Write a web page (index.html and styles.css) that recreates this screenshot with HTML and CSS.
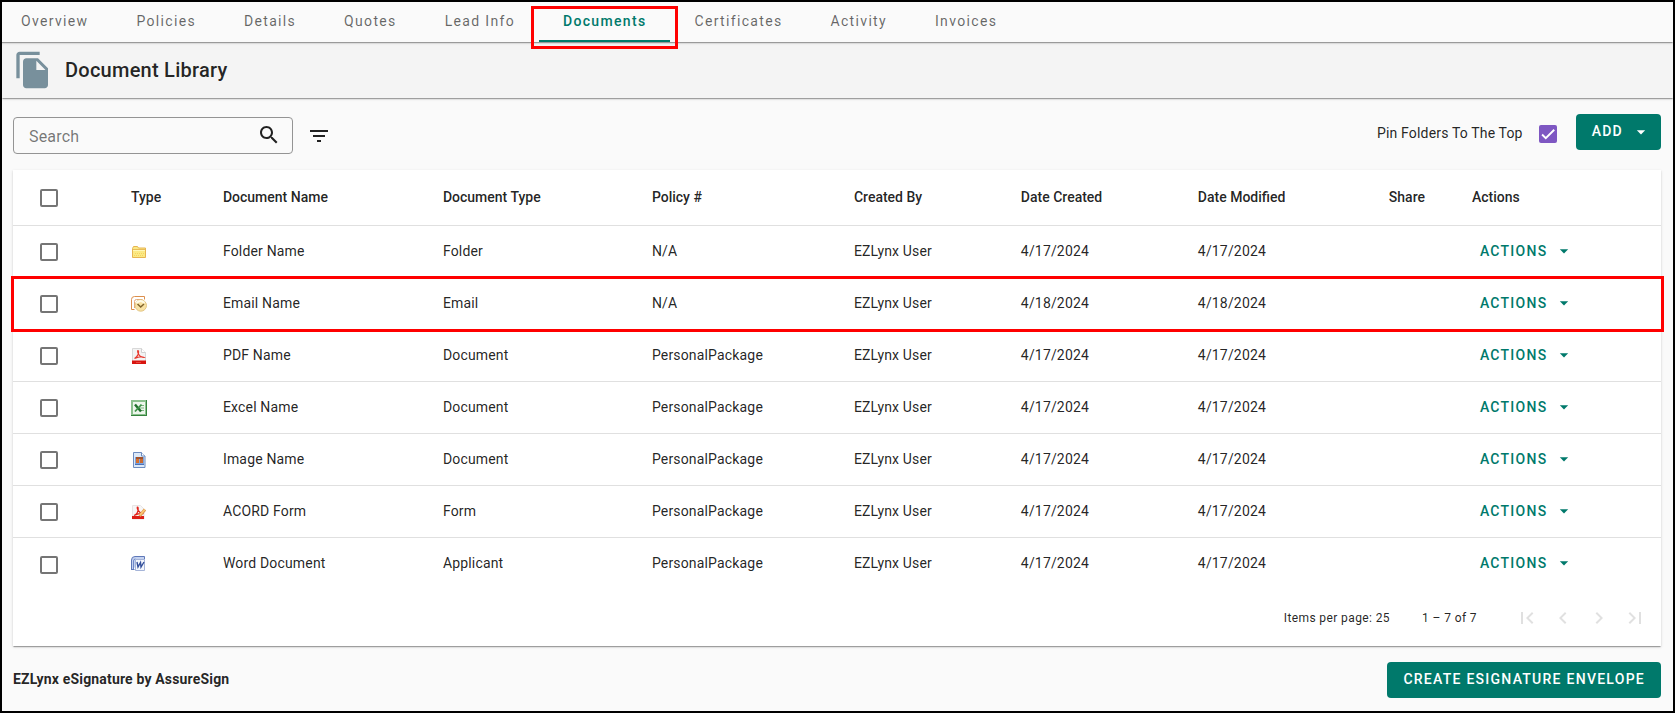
FILE: index.html
```html
<!DOCTYPE html>
<html lang="en">
<head>
<meta charset="UTF-8" />
<meta name="viewport" content="width=device-width, initial-scale=1" />
<title>Document Library</title>
<link rel="stylesheet" href="styles.css">
</head>
<body>

<svg class="sprite" aria-hidden="true">
  <symbol id="caret" viewBox="0 0 24 24"><path d="M7 10l5 5 5-5z"/></symbol>
</svg>

<nav class="tabs" aria-label="Account sections">
  <a href="#" class="tab">Overview</a>
  <a href="#" class="tab">Policies</a>
  <a href="#" class="tab">Details</a>
  <a href="#" class="tab">Quotes</a>
  <a href="#" class="tab">Lead Info</a>
  <a href="#" class="tab active" aria-current="page">Documents</a>
  <a href="#" class="tab">Certificates</a>
  <a href="#" class="tab">Activity</a>
  <a href="#" class="tab">Invoices</a>
</nav>

<header class="page-header">
  <svg class="header-icon" viewBox="0 0 24 24" aria-hidden="true"><path d="M16 1H4c-1.1 0-2 .9-2 2v14h2V3h12V1zm-1 4l6 6v10c0 1.1-.9 2-2 2H7.99C6.89 23 6 22.1 6 21l.01-14c0-1.1.89-2 1.99-2h7zm-1 7h5.5L14 6.500V12z"/></svg>
  <h1>Document Library</h1>
</header>

<main>
  <div class="toolbar">
    <div class="search">
      <input type="text" id="search" placeholder="Search" aria-label="Search" />
      <button type="button" class="icon-button" aria-label="Run search">
        <svg viewBox="0 0 24 24"><path d="M15.5 14h-.79l-.28-.27C15.410 12.590 16 11.110 16 9.500 16 5.910 13.090 3 9.500 3S3 5.910 3 9.500 5.910 16 9.500 16c1.610 0 3.090-.59 4.230-1.570l.27.28v.79l5 4.990L20.490 19l-4.990-5zm-6 0C7.010 14 5 11.990 5 9.500S7.010 5 9.500 5 14 7.010 14 9.500 11.990 14 9.500 14z"/></svg>
      </button>
    </div>
    <button type="button" class="icon-button" aria-label="Filter">
      <svg viewBox="0 0 24 24"><path d="M10 18h4v-2h-4v2zM3 6v2h18V6H3zm3 7h12v-2H6v2z"/></svg>
    </button>
    <div class="toolbar-right">
      <label for="pin">Pin Folders To The Top</label>
      <input type="checkbox" id="pin" class="checkbox" checked />
      <button type="button" class="btn btn-add">ADD <svg class="caret"><use href="#caret"/></svg></button>
    </div>
  </div>

  <section class="card">
    <table>
      <colgroup>
        <col class="col-check"><col class="col-icon"><col class="col-name"><col class="col-doctype"><col class="col-policy">
        <col class="col-user"><col class="col-created"><col class="col-modified"><col class="col-share"><col class="col-actions">
      </colgroup>
      <thead>
        <tr>
          <th><input type="checkbox" class="checkbox" aria-label="Select all" /></th>
          <th>Type</th>
          <th>Document Name</th>
          <th>Document Type</th>
          <th>Policy #</th>
          <th>Created By</th>
          <th>Date Created</th>
          <th>Date Modified</th>
          <th>Share</th>
          <th>Actions</th>
        </tr>
      </thead>
      <tbody>
        <tr>
          <td><input type="checkbox" class="checkbox" aria-label="Select Folder Name" /></td>
          <td>
            <svg class="file-icon" viewBox="0 0 16 16" aria-label="Folder">
              <path d="M1.500 13.500V4.500l1-2h4l1 1.500h7v9.500z" fill="#fbe984" stroke="#e6b450"/>
              <path d="M2 5.500h12" stroke="#e8bc58"/>
              <path d="M2 6.500h12" stroke="#fff8b8"/>
              <path d="M3 11.500h10M4 9.500h9" stroke="#f5d45d" stroke-dasharray="1 1"/>
            </svg>
          </td>
          <td>Folder Name</td>
          <td>Folder</td>
          <td>N/A</td>
          <td>EZLynx User</td>
          <td>4/17/2024</td>
          <td>4/17/2024</td>
          <td></td>
          <td><button type="button" class="btn-actions">ACTIONS <svg class="caret"><use href="#caret"/></svg></button></td>
        </tr>
        <tr class="highlight">
          <td><input type="checkbox" class="checkbox" aria-label="Select Email Name" /></td>
          <td>
            <svg class="file-icon" viewBox="0 0 16 16" aria-label="Email">
              <path d="M.5 13.500V3.500q0-3 3-3h10v3M.5 13.500h3" fill="none" stroke="#dc8f4c"/>
              <path d="M3.500 12V5.500q0-2 2-2h6" fill="none" stroke="#e3a878"/>
              <circle cx="9.800" cy="9.500" r="5.700" fill="#f8e2a4" stroke="#e3c583"/>
              <path d="M5.500 7q4-4 8 0" fill="none" stroke="#fffbe8" stroke-width="2"/>
              <path d="M6.500 8l3.200 3 3.300-3" fill="none" stroke="#80642c" stroke-width="1.500"/>
            </svg>
          </td>
          <td>Email Name</td>
          <td>Email</td>
          <td>N/A</td>
          <td>EZLynx User</td>
          <td>4/18/2024</td>
          <td>4/18/2024</td>
          <td></td>
          <td><button type="button" class="btn-actions">ACTIONS <svg class="caret"><use href="#caret"/></svg></button></td>
        </tr>
        <tr>
          <td><input type="checkbox" class="checkbox" aria-label="Select PDF Name" /></td>
          <td>
            <svg class="file-icon" viewBox="0 0 16 16" aria-label="PDF">
              <path d="M1.500 15V.5h9l4 4V15z" fill="#f3f3f3" stroke="#d8d8d8"/>
              <path d="M10.500.5v4h4" fill="#fff" stroke="#d0d0d0"/>
              <path d="M3.500 10.500c3-1.500 4.500-5 4-7.500-.8-1-1.500.5 0 3 1.200 2 3 3.500 5.500 3.500-2-1.500-6-.5-9.500 1z" fill="none" stroke="#e83a30" stroke-width="1.200"/>
              <path d="M1 12.500h14V16H1z" fill="#d8140f"/>
              <path d="M5 14.500h5" stroke="#e8483e"/>
            </svg>
          </td>
          <td>PDF Name</td>
          <td>Document</td>
          <td>PersonalPackage</td>
          <td>EZLynx User</td>
          <td>4/17/2024</td>
          <td>4/17/2024</td>
          <td></td>
          <td><button type="button" class="btn-actions">ACTIONS <svg class="caret"><use href="#caret"/></svg></button></td>
        </tr>
        <tr>
          <td><input type="checkbox" class="checkbox" aria-label="Select Excel Name" /></td>
          <td>
            <svg class="file-icon" viewBox="0 0 16 16" aria-label="Excel">
              <path d="M0 0h16v16H0z" fill="#8cc08e"/>
              <path d="M15 0h1v16H0v-1h15z" fill="#34833d"/>
              <path d="M2 2h12v12H2z" fill="#edf6ec"/>
              <path d="M9 5.500h4M9 8h4M9 10.500h4" stroke="#7fb583"/>
              <path d="M4 4.500l6 7" stroke="#1f6e2b" stroke-width="2.400"/>
              <path d="M10.500 4.500l-6.500 7" stroke="#3d9247" stroke-width="1.800"/>
            </svg>
          </td>
          <td>Excel Name</td>
          <td>Document</td>
          <td>PersonalPackage</td>
          <td>EZLynx User</td>
          <td>4/17/2024</td>
          <td>4/17/2024</td>
          <td></td>
          <td><button type="button" class="btn-actions">ACTIONS <svg class="caret"><use href="#caret"/></svg></button></td>
        </tr>
        <tr>
          <td><input type="checkbox" class="checkbox" aria-label="Select Image Name" /></td>
          <td>
            <svg class="file-icon" viewBox="0 0 16 16" aria-label="Image">
              <path d="M2.500 15.500V.5h8l3.500 3.500v11.500z" fill="#dce9f8" stroke="#6d8cc0"/>
              <path d="M10.500.5v3.500h3.500" fill="#fff" stroke="#6d8cc0"/>
              <path d="M4 5h9v8H4z" fill="#7fa4dc"/>
              <path d="M5 5h7v2H5z" fill="#a0522d"/>
              <path d="M5 7h3v4H5z" fill="#d9702c"/>
              <path d="M9 7h3v4H9z" fill="#c86a30"/>
              <path d="M4 12.500h9" stroke="#4a70b8"/>
            </svg>
          </td>
          <td>Image Name</td>
          <td>Document</td>
          <td>PersonalPackage</td>
          <td>EZLynx User</td>
          <td>4/17/2024</td>
          <td>4/17/2024</td>
          <td></td>
          <td><button type="button" class="btn-actions">ACTIONS <svg class="caret"><use href="#caret"/></svg></button></td>
        </tr>
        <tr>
          <td><input type="checkbox" class="checkbox" aria-label="Select ACORD Form" /></td>
          <td>
            <svg class="file-icon" viewBox="0 0 16 16" aria-label="Form">
              <path d="M1.500 15V1.500h8l3.500 3.500V15z" fill="#f6f6f6" stroke="#e8e4e4"/>
              <path d="M3 11.500c3-1.500 4.500-5 4-8-.8-1-1.300.5.3 3 1.200 2 2.700 3.200 5.200 3.200-2.500-.7-6 .3-9.500 1.800z" fill="none" stroke="#e2231a" stroke-width="1.300"/>
              <path d="M1 12h12v3H1z" fill="#dc1e16"/>
              <path d="M8.500 12l5.500-6.500" stroke="#dc9650" stroke-width="3"/>
              <path d="M8.800 11.300l5-5.800" stroke="#fbc872" stroke-width="1.600"/>
            </svg>
          </td>
          <td>ACORD Form</td>
          <td>Form</td>
          <td>PersonalPackage</td>
          <td>EZLynx User</td>
          <td>4/17/2024</td>
          <td>4/17/2024</td>
          <td></td>
          <td><button type="button" class="btn-actions">ACTIONS <svg class="caret"><use href="#caret"/></svg></button></td>
        </tr>
        <tr>
          <td><input type="checkbox" class="checkbox" aria-label="Select Word Document" /></td>
          <td>
            <svg class="file-icon" viewBox="0 0 16 16" aria-label="Word">
              <path d="M.5 14V4q0-3.500 3.500-3.500h9.500v3M.5 13.500h3" fill="#c4d2f0" stroke="#5f78b8"/>
              <path d="M2.500 13V5q0-2 2-2" fill="none" stroke="#6f88c8"/>
              <path d="M4.500 3.500h9v11h-9z" fill="#f4f7fd" stroke="#a5b4d8"/>
              <path d="M6 6l1 5 2.500-4.500.5 4.500 3-5" fill="none" stroke="#34509c" stroke-width="1.400"/>
            </svg>
          </td>
          <td>Word Document</td>
          <td>Applicant</td>
          <td>PersonalPackage</td>
          <td>EZLynx User</td>
          <td>4/17/2024</td>
          <td>4/17/2024</td>
          <td></td>
          <td><button type="button" class="btn-actions">ACTIONS <svg class="caret"><use href="#caret"/></svg></button></td>
        </tr>
      </tbody>
    </table>

    <div class="paginator">
      <span>Items per page: 25</span>
      <span>1 – 7 of 7</span>
      <div class="paginator-buttons">
        <button type="button" disabled aria-label="First page"><svg viewBox="0 0 24 24"><path d="M18.410 16.590L13.820 12l4.590-4.590L17 6l-6 6 6 6zM6 6h2v12H6z"/></svg></button>
        <button type="button" disabled aria-label="Previous page"><svg viewBox="0 0 24 24"><path d="M15.410 7.410L14 6l-6 6 6 6 1.410-1.410L10.830 12z"/></svg></button>
        <button type="button" disabled aria-label="Next page"><svg viewBox="0 0 24 24"><path d="M10 6L8.590 7.410 13.170 12l-4.580 4.590L10 18l6-6z"/></svg></button>
        <button type="button" disabled aria-label="Last page"><svg viewBox="0 0 24 24"><path d="M5.590 7.410L10.180 12l-4.590 4.590L7 18l6-6-6-6zM16 6h2v12h-2z"/></svg></button>
      </div>
    </div>
  </section>

  <footer class="esign">
    <strong>EZLynx eSignature by AssureSign</strong>
    <button type="button" class="btn">CREATE ESIGNATURE ENVELOPE</button>
  </footer>
</main>

</body>
</html>
```
FILE: styles.css
```css
/* Base styles */
* {
  box-sizing: border-box;
}

body {
  margin: 0;
  min-height: 100vh;
  border: 2px solid #000;
  background: #fafafa;
  color: rgba(0, 0, 0, 0.87);
  font-family: Roboto, sans-serif;
  font-size: 14px;
  line-height: 20px;
  letter-spacing: 0.012em;
}

button, input {
  font: inherit;
  letter-spacing: inherit;
  color: inherit;
}

button {
  border: none;
  background: none;
  padding: 0;
  cursor: pointer;
}

svg {
  display: block;
  fill: currentColor;
}

.sprite {
  display: none;
}

/* Tabs */
.tabs {
  display: flex;
  height: 40px;
  margin-left: -5px;
  position: relative;
  z-index: 2;
  background: #fafafa;
  box-shadow: 0 2px 1px -1px rgba(0,0,0,0.2), 0 1px 1px rgba(0,0,0,0.14), 0 1px 3px rgba(0,0,0,0.12);
  clip-path: inset(0 0 -10px 5px);
}

.tab {
  padding: 9px 24px 0;
  color: rgba(0, 0, 0, 0.6);
  text-decoration: none;
  letter-spacing: 0.095em;
}

.tab.active {
  position: relative;
  color: #00796b;
  font-weight: 500;
  border-bottom: 2px solid #00796b;
}

.tab.active::after {
  content: "";
  position: absolute;
  inset: 4px -8px -9px;
  border: 3px solid #f00;
}

/* Page header */
.page-header {
  display: flex;
  align-items: center;
  gap: 12px;
  height: 56px;
  padding-left: 11px;
  position: relative;
  z-index: 1;
  background: #f4f4f4;
  box-shadow: 0 2px 1px -1px rgba(0,0,0,0.2), 0 1px 1px rgba(0,0,0,0.14), 0 1px 3px rgba(0,0,0,0.12);
}

.header-icon {
  width: 40px;
  height: 40px;
  fill: #78909c;
}

h1 {
  margin: 0;
  font-size: 20px;
  font-weight: 500;
  line-height: 32px;
  letter-spacing: 0.0125em;
}

main {
  padding: 0 12px 12px 11px;
}

/* Toolbar */
.toolbar {
  display: flex;
  align-items: center;
  gap: 14px;
  height: 72px;
  padding-bottom: 4px;
}

.search {
  display: flex;
  align-items: center;
  width: 280px;
  height: 37px;
  margin-top: 6px;
  padding: 0 11px 0 15px;
  border: 1px solid #949494;
  border-radius: 4px;
}

.search input {
  flex: 1;
  min-width: 0;
  padding: 3px 0 0;
  border: none;
  outline: none;
  background: none;
  font-size: 16px;
}

.search input::placeholder {
  color: rgba(0, 0, 0, 0.54);
}

.icon-button svg {
  width: 24px;
  height: 24px;
}

.toolbar > .icon-button {
  margin-top: 8px;
}

.toolbar-right {
  display: flex;
  align-items: center;
  gap: 16px;
  margin-left: auto;
}

.toolbar-right .checkbox {
  margin: 4px 3px 0 0;
}

.toolbar-right label {
  margin-top: 2px;
}

.checkbox {
  appearance: none;
  display: block;
  width: 18px;
  height: 18px;
  margin: 3px 0 0;
  border: 2px solid rgba(0, 0, 0, 0.54);
  border-radius: 2px;
}

.checkbox:checked {
  border: none;
  background: #7e57c2 url("data:image/svg+xml,%3Csvg xmlns='http://www.w3.org/2000/svg' viewBox='0 0 24 24'%3E%3Cpath d='M4.100 12.700L9 17.600 20.300 6.300' fill='none' stroke='white' stroke-width='2.500'/%3E%3C/svg%3E") center / 18px no-repeat;
}

.btn {
  display: flex;
  align-items: center;
  height: 36px;
  padding: 0 16px 2px;
  border-radius: 4px;
  background: #00796b;
  color: #fff;
  font-weight: 500;
  letter-spacing: 0.09em;
}

.btn-add {
  padding-right: 10px;
}

.caret {
  width: 20px;
  height: 20px;
}

.btn-add .caret {
  margin: 2px 0 0 8px;
}

/* Documents table */
.card {
  background: #fff;
  box-shadow: 0 2px 1px -1px rgba(0,0,0,0.2), 0 1px 1px rgba(0,0,0,0.14), 0 1px 3px rgba(0,0,0,0.12);
}

table {
  width: 100%;
  table-layout: fixed;
  border-collapse: separate;
  border-spacing: 0;
}

.col-check { width: 7.16%; }
.col-icon { width: 5.58%; }
.col-name { width: 13.35%; }
.col-doctype { width: 12.68%; }
.col-policy { width: 12.26%; }
.col-user { width: 10.13%; }
.col-created { width: 10.74%; }
.col-modified { width: 11.59%; }
.col-share { width: 5.04%; }
.col-actions { width: 11.47%; }

th, td {
  height: 52px;
  padding: 0 0 2px;
  text-align: left;
  border-bottom: 1px solid #e0e0e0;
}

th {
  height: 56px;
  font-weight: 500;
  letter-spacing: normal;
}

th:first-child, td:first-child {
  padding-left: 27px;
}

tbody tr:last-child td {
  border-bottom: none;
}

.file-icon {
  width: 16px;
  height: 16px;
  margin-top: 2px;
}

.highlight {
  position: relative;
}

.highlight::after {
  content: "";
  position: absolute;
  inset: -2px -3px -2px -2px;
  border: 3px solid #f00;
}

.btn-actions {
  display: flex;
  align-items: center;
  padding-left: 8px;
  color: #00796b;
  font-weight: 500;
  letter-spacing: 0.09em;
}

.btn-actions .caret {
  margin-left: 7px;
}

/* Paginator */
.paginator {
  display: flex;
  align-items: center;
  justify-content: flex-end;
  gap: 32px;
  height: 56px;
  padding-right: 8px;
  font-size: 12px;
  letter-spacing: 0.033em;
}

.paginator-buttons {
  display: flex;
}

.paginator-buttons button {
  display: flex;
  align-items: center;
  justify-content: center;
  width: 36px;
  height: 36px;
  color: rgba(0, 0, 0, 0.12);
}

.paginator-buttons svg {
  width: 24px;
  height: 24px;
}

.esign {
  display: flex;
  align-items: center;
  justify-content: space-between;
  padding-top: 16px;
}

.esign strong {
  padding-bottom: 2px;
  font-weight: 700;
}
```
